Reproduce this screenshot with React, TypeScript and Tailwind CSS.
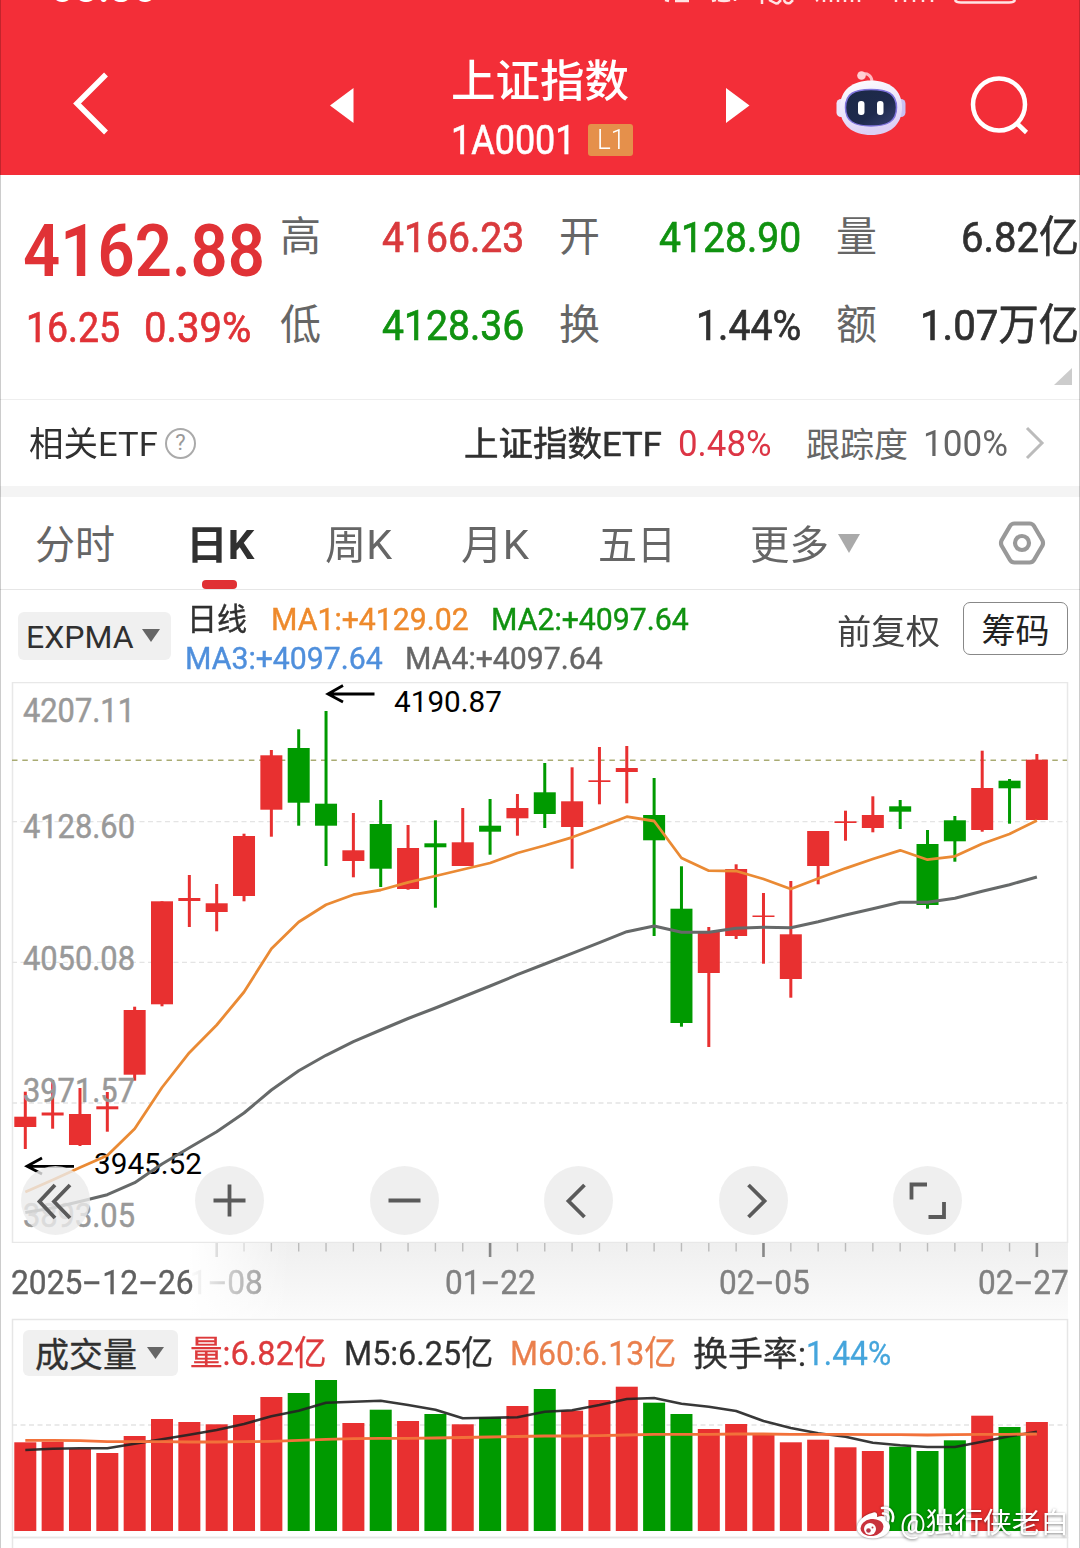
import { Fragment, useLayoutEffect, useRef, useState } from 'react';
import type { ReactNode } from 'react';
import clsx from 'clsx';

const RED = '#e83030';
const GREEN = '#009a00';

const STEP = 27.34;
const FIRST_X = 25.3;
const BAR_WIDTH = 22;

const xAt = (index: number) => FIRST_X + index * STEP;

interface Candle {
  up: boolean;
  high: number;
  top: number;
  bottom: number;
  low: number;
  volume: number;
}

const c = (dir: 'r' | 'g', high: number, top: number, bottom: number, low: number, volume: number): Candle => ({
  up: dir === 'r',
  high,
  top,
  bottom,
  low,
  volume,
});

// Positions are in chart space, volume is the top edge of the bar
const candles: Candle[] = [
  c('r', 1091.7, 1116.7, 1127, 1149, 1442.3),
  c('r', 1080, 1112.5, 1115.5, 1128.7, 1441.7),
  c('r', 1088, 1114, 1145, 1146, 1449),
  c('r', 1092, 1106.3, 1109.3, 1131.7, 1453),
  c('r', 1006.7, 1010, 1074.7, 1080.7, 1436),
  c('r', 901.3, 901.3, 1004.3, 1006.3, 1419),
  c('r', 875, 898, 901, 927, 1422),
  c('r', 884, 903.3, 912, 931.3, 1424.3),
  c('r', 833.7, 836, 896, 901.3, 1415),
  c('r', 750, 755.3, 809.7, 836.7, 1397),
  c('g', 729.3, 748, 802.7, 825.7, 1393),
  c('g', 711, 803.7, 825.7, 866, 1380),
  c('r', 813, 850.3, 861, 877.3, 1423),
  c('g', 800, 824, 868.7, 887, 1409.7),
  c('r', 825, 848, 889, 889.7, 1421),
  c('g', 820.3, 843.3, 847.3, 907.7, 1414),
  c('r', 808, 842.3, 866, 866, 1424.3),
  c('g', 799, 825.7, 831.7, 854.7, 1417.3),
  c('r', 794, 808, 818.3, 835.7, 1406),
  c('g', 763, 792.3, 814, 828, 1389),
  c('r', 767.3, 801.3, 827, 868.7, 1410.7),
  c('r', 747, 780.3, 782, 804.3, 1400),
  c('r', 746, 768, 772, 803.3, 1386.7),
  c('g', 778, 815, 840.3, 936, 1402.7),
  c('g', 866.3, 908.7, 1023, 1026.7, 1414),
  c('r', 927, 931.7, 973, 1047, 1429),
  c('r', 864.3, 869, 936, 939, 1424),
  c('r', 893, 915.5, 917, 963.7, 1435),
  c('r', 881, 934.3, 979, 997.7, 1442.3),
  c('r', 831, 831, 866, 884.3, 1439.7),
  c('r', 810.7, 821.3, 823, 840.7, 1447.3),
  c('r', 796.3, 815, 828, 832.3, 1451),
  c('g', 800, 806.3, 811.7, 829, 1446.7),
  c('g', 830, 844, 905, 908.7, 1451),
  c('g', 816, 820.3, 841.3, 861.7, 1440.3),
  c('r', 750.7, 788, 830, 831.7, 1415.7),
  c('g', 779, 780.7, 788.3, 823.7, 1427),
  c('r', 754, 759.7, 820, 820, 1422),
];

const fastMa = [
  1192, 1180, 1167.5, 1155.5, 1128.7, 1087.5, 1052.7, 1025, 992, 948.7, 922, 904.7, 894.7, 890, 882.3, 876, 869.5,
  863, 853, 845.5, 837.3, 827.3, 816.7, 821, 858, 870.7, 871, 879, 889, 878.5, 868.3, 859, 850.3, 859.7, 856.3,
  843.7, 834, 820.5,
];

const slowMa = [
  1212.5, 1208, 1201.5, 1194.7, 1182.7, 1164, 1147.7, 1131.7, 1113, 1090, 1070.7, 1055.3, 1041.7, 1030, 1018.5, 1008,
  997, 986, 974.7, 964, 953.3, 942.7, 931.7, 926, 932.3, 932.3, 928.3, 927.3, 927.7, 921.7, 915, 908.7, 902.3, 902.3,
  898.3, 891.3, 884.7, 877,
];

const volumeM5 = [
  1450, 1448.7, 1448.3, 1448.3, 1443.7, 1439.3, 1434.7, 1430, 1424, 1416.3, 1410.7, 1402.7, 1401.7, 1400.7, 1405,
  1409.7, 1418.3, 1417.7, 1417.3, 1411.7, 1410.3, 1405, 1399, 1398, 1403.7, 1406.7, 1411, 1421, 1428, 1433.3, 1436.7,
  1442.7, 1445.3, 1447, 1447, 1441.7, 1436.3, 1431.7,
];

const volumeM60 = [
  1440.3, 1440.3, 1440.7, 1441.7, 1441.7, 1441.7, 1442, 1442, 1441.7, 1441.3, 1440.3, 1439.3, 1438.7, 1438.3, 1438.3,
  1438, 1437.5, 1437, 1436.5, 1436, 1436, 1435.7, 1435, 1434.3, 1434.3, 1434.3, 1434, 1434, 1434.3, 1434.3, 1434.3,
  1434.7, 1434.7, 1435, 1434.7, 1434.3, 1434.3, 1434,
];

const toPoints = (values: number[]) => values.map((y, i) => `${xAt(i).toFixed(1)},${y}`).join(' ');

// Squeezes a line of text horizontally so that it fills its box
function Fit({ className, children }: { className?: string; children: ReactNode }) {
  const outerRef = useRef<HTMLSpanElement>(null);
  const innerRef = useRef<HTMLSpanElement>(null);
  const [scale, setScale] = useState(1);

  useLayoutEffect(() => {
    if (outerRef.current && innerRef.current) {
      setScale(outerRef.current.clientWidth / innerRef.current.offsetWidth);
    }
  }, [children]);

  return (
    <span ref={outerRef} className={clsx('block shrink-0 leading-none', className)}>
      <span
        ref={innerRef}
        className="inline-block origin-left whitespace-nowrap"
        style={{ transform: `scaleX(${scale})` }}
      >
        {children}
      </span>
    </span>
  );
}

// Dates are set with wide dashes between the parts
function DateText({ value, className }: { value: string; className?: string }) {
  return (
    <Fit className={clsx('[-webkit-text-stroke:0.4px]', className)}>
      {value.split('-').map((part, i) => (
        <Fragment key={i}>
          {i > 0 && <span className="mx-[6px] inline-block -translate-y-px scale-x-[1.9]">-</span>}
          {part}
        </Fragment>
      ))}
    </Fit>
  );
}

function RobotIcon() {
  return (
    <svg width="72" height="72" viewBox="0 0 72 72" className="mt-[60px] ml-[85px] shrink-0">
      <defs>
        <linearGradient id="shell" x1="0" y1="0" x2="0.3" y2="1">
          <stop offset="0" stopColor="#ffffff" />
          <stop offset="0.55" stopColor="#ece6fb" />
          <stop offset="1" stopColor="#dcd0f5" />
        </linearGradient>
        <linearGradient id="visor" x1="0" y1="0" x2="1" y2="1">
          <stop offset="0" stopColor="#1b2946" />
          <stop offset="0.6" stopColor="#1f2a4d" />
          <stop offset="1" stopColor="#37406f" />
        </linearGradient>
      </defs>
      <path d="M27 8.500c5-2 9.500 1 10 6.500" fill="none" stroke="#ffb9c0" strokeWidth="3" />
      <circle cx="26.500" cy="9.500" r="4.300" fill="#ffd0d3" />
      <rect x="1.500" y="33" width="11" height="18" rx="4.500" fill="#ece4fa" />
      <rect x="59.500" y="33" width="11" height="18" rx="4.500" fill="#c9c0f3" />
      <path d="M36 14.500c18 0 31 9 31 27S54 69 36 69 5 59.500 5 41.500s13-27 31-27z" fill="url(#shell)" />
      <path
        d="M36 23.500c16.500 0 25.500 4 25.500 18S52.500 60 36 60s-25.500-4.500-25.500-18.500 9-18 25.500-18z"
        fill="url(#visor)"
        stroke="#7f74dd"
        strokeWidth="1.500"
      />
      <rect x="23" y="35" width="6.500" height="14" rx="3" fill="#fff" />
      <rect x="42" y="35" width="6.500" height="14" rx="3" fill="#fff" />
    </svg>
  );
}

function StatusBar() {
  return (
    <div className="relative h-[6px] overflow-hidden">
      <span className="absolute bottom-[-3px] left-[51px] text-[40px] leading-none font-medium tracking-[1px]">08:30</span>
      <svg width="370" height="6" viewBox="0 0 370 6" className="absolute top-0 right-[56px]" fill="none" stroke="#ffe3e3" strokeWidth="2.500">
        <path d="M11 0l4 1M21 1h14M58 1l4-1M64 0q6 2 12 0M81 0v1M108 0v4M115 0l8 4M123 4l4-4M130 0q1 4 6 3l3-3" />
        <path d="M162 1l2-1M170 0v2M177 0v2M184 0v2M191 0v2M198 0v2M205 0v2M242 0v2M251 0v2M260 0v2M269 0v2M278 0v2" />
        <path d="M301 0q1 2.500 6 2.500h48q5 0 6-2.500" />
      </svg>
    </div>
  );
}

function Header() {
  return (
    <header className="h-[175px] bg-[#f32e38] text-white">
      <StatusBar />
      <div className="flex h-[169px] items-start">
        <svg width="40" height="64" viewBox="0 0 40 64" className="mt-[65px] ml-[71px]" fill="none" stroke="#fff" strokeWidth="5.500">
          <path d="M35 3.500L6 32.500L35 61.500" />
        </svg>
        <svg width="24" height="36" viewBox="0 0 24 36" className="mt-[82px] ml-[219px]" fill="#fff">
          <path d="M0 17.500L23.500 0V35z" />
        </svg>
        <div className="ml-[97px] w-[184px]">
          <Fit className="mt-[54px] w-[178px] text-[44px] font-medium">上证指数</Fit>
          <div className="mt-[14px] flex items-center">
            <Fit className="mt-[3px] w-[125px] text-[40px] [-webkit-text-stroke:0.6px]">1A0001</Fit>
            <div className="ml-[12px] flex h-[32px] w-[45px] justify-center rounded-[3px] bg-[#e5904b] pt-[3px]">
              <Fit className="w-[28px] text-[27px] font-light">L1</Fit>
            </div>
          </div>
        </div>
        <svg width="24" height="36" viewBox="0 0 24 36" className="mt-[82px] ml-[91px]" fill="#fff">
          <path d="M0 0L23.500 17.500L0 35z" />
        </svg>
        <RobotIcon />
        <svg width="60" height="60" viewBox="0 0 60 60" className="mt-[70px] ml-[62px]" fill="none" stroke="#fff" strokeWidth="4.500">
          <circle cx="30" cy="28.500" r="26" />
          <path d="M47.500 47L57.500 56.500" />
        </svg>
      </div>
    </header>
  );
}

function QuoteCell({ label, valueClass, children }: { label: string; valueClass: string; children: ReactNode }) {
  return (
    <div className="flex h-[88px] items-center justify-between">
      <span className="text-[41px] leading-none text-[#666]">{label}</span>
      <Fit className={clsx('text-[43px] [-webkit-text-stroke:0.7px]', valueClass)}>{children}</Fit>
    </div>
  );
}

function Quote() {
  return (
    <section className="relative flex h-[225px] border-b border-[#eee] pt-[18px]">
      <div className="ml-[23px] w-[257px] pt-[22px] text-[#e03236]">
        <Fit className="w-[242px] text-[73px] font-semibold">4162.88</Fit>
        <div className="mt-[18px] flex gap-[24px] [-webkit-text-stroke:0.7px]">
          <Fit className="ml-[3px] w-[94px] text-[43px]">16.25</Fit>
          <Fit className="w-[107px] text-[43px]">0.39%</Fit>
        </div>
      </div>
      <div className="w-[244px]">
        <QuoteCell label="高" valueClass="w-[142px] text-[#d93a3d]">4166.23</QuoteCell>
        <QuoteCell label="低" valueClass="w-[142px] text-[#109210]">4128.36</QuoteCell>
      </div>
      <div className="ml-[35px] w-[242px]">
        <QuoteCell label="开" valueClass="w-[142px] text-[#109210]">4128.90</QuoteCell>
        <QuoteCell label="换" valueClass="w-[105px] text-[#303030]">1.44%</QuoteCell>
      </div>
      <div className="ml-[35px] w-[243px]">
        <QuoteCell label="量" valueClass="w-[118px] text-[#303030]">6.82亿</QuoteCell>
        <QuoteCell label="额" valueClass="w-[159px] text-[#303030]">1.07万亿</QuoteCell>
      </div>
      <svg width="18" height="17" viewBox="0 0 18 17" className="absolute right-[8px] bottom-[14px]" fill="#ccc">
        <path d="M18 0V17H0z" />
      </svg>
    </section>
  );
}

function EtfRow() {
  return (
    <section className="flex h-[86px] items-center text-[34px] text-[#303030]">
      <Fit className="mt-[2px] ml-[29px] w-[129px]">相关ETF</Fit>
      <span className="ml-[7px] flex size-[31px] items-center justify-center rounded-full border-2 border-[#aaa] text-[22px] leading-none text-[#999]">
        ?
      </span>
      <Fit className="mt-[2px] ml-[268px] w-[198px] [-webkit-text-stroke:0.6px]">上证指数ETF</Fit>
      <Fit className="mt-[2px] ml-[16px] w-[94px] text-[36px] text-[#dc3545]">0.48%</Fit>
      <Fit className="mt-[4px] ml-[34px] w-[102px] text-[#666]">跟踪度</Fit>
      <Fit className="mt-[2px] ml-[15px] w-[85px] text-[36px] text-[#666]">100%</Fit>
      <svg width="20" height="34" viewBox="0 0 20 34" className="ml-[17px]" fill="none" stroke="#bbb" strokeWidth="3">
        <path d="M2 2L17 17L2 32" />
      </svg>
    </section>
  );
}

function Tabs() {
  return (
    <nav className="flex h-[93px] items-center border-b border-[#e6e6e6] text-[40px] text-[#666]">
      <Fit className="mt-[5px] ml-[35px] w-[80px]">分时</Fit>
      <div className="relative ml-[71px] flex h-full w-[69px] items-center">
        <Fit className="mt-[5px] w-[68px] font-bold text-[#303030]">日K</Fit>
        <span className="absolute bottom-0 left-[16px] h-[9px] w-[35px] rounded-[4px] bg-[#e03033]" />
      </div>
      <Fit className="mt-[5px] ml-[70px] w-[67px]">周K</Fit>
      <Fit className="mt-[5px] ml-[69px] w-[68px]">月K</Fit>
      <Fit className="mt-[5px] ml-[69px] w-[78px]">五日</Fit>
      <Fit className="mt-[5px] ml-[74px] w-[79px]">更多</Fit>
      <svg width="22" height="19" viewBox="0 0 22 19" className="ml-[9px]" fill="#aaa">
        <path d="M0 0H22L11 19z" />
      </svg>
      <svg width="48" height="46" viewBox="0 0 48 46" className="ml-[138px]" fill="none" stroke="#999" strokeWidth="4.200" strokeLinejoin="round">
        <path d="M16.500 3.500H31.500Q34.500 3.500 36 6L44.500 20.500Q45.500 23 44.500 25.500L36 40Q34.500 42.500 31.500 42.500H16.500Q13.500 42.500 12 40L3.500 25.500Q2.500 23 3.500 20.500L12 6Q13.500 3.500 16.500 3.500z" />
        <circle cx="24" cy="23" r="7" />
      </svg>
    </nav>
  );
}

function IndicatorBar() {
  return (
    <section className="flex h-[92px] items-start text-[31px]">
      <div className="mt-[22px] ml-[18px] flex h-[48px] w-[153px] items-center rounded-[6px] bg-[#f0f0f0] pt-[2px] pl-[8px]">
        <Fit className="w-[108px] text-[32px] text-[#303030]">EXPMA</Fit>
        <svg width="18" height="13" viewBox="0 0 18 13" className="mb-[4px] ml-[8px]" fill="#666">
          <path d="M0 0H18L9 13z" />
        </svg>
      </div>
      <div className="ml-[15px] w-[520px] [-webkit-text-stroke:0.4px]">
        <div className="mt-[14px] flex">
          <Fit className="ml-px w-[60px] text-[#303030]">日线</Fit>
          <Fit className="ml-[24px] w-[198px] text-[#ee8a2c]">MA1:+4129.02</Fit>
          <Fit className="ml-[22px] w-[198px] text-[#109210]">MA2:+4097.64</Fit>
        </div>
        <div className="mt-[8px] flex">
          <Fit className="-ml-px w-[198px] text-[#4f8fdc]">MA3:+4097.64</Fit>
          <Fit className="ml-[22px] w-[198px] text-[#666]">MA4:+4097.64</Fit>
        </div>
      </div>
      <Fit className="mt-[25px] ml-[131px] w-[103px] text-[34px] text-[#444]">前复权</Fit>
      <div className="mt-[12px] ml-[23px] flex h-[53px] w-[105px] justify-center rounded-[7px] border border-[#888] pt-[11px]">
        <Fit className="w-[68px] text-[34px] text-[#222]">筹码</Fit>
      </div>
    </section>
  );
}

const axisLabels = [
  { text: '4207.11', y: 721.5 },
  { text: '4128.60', y: 838 },
  { text: '4050.08', y: 970.3 },
  { text: '3971.57', y: 1102.3 },
  { text: '3893.05', y: 1227.3 },
];

function KLineChart() {
  return (
    <svg width="1080" height="562" viewBox="0 682 1080 562" className="block">
      <rect x="12.500" y="682.500" width="1055" height="560" fill="none" stroke="#e8e8e8" strokeWidth="1.500" />
      {[821.7, 962.3, 1103].map((y) => (
        <line key={y} x1="12" x2="1067" y1={y} y2={y} stroke="#e4e4e4" strokeWidth="1.300" strokeDasharray="5 3.500" />
      ))}
      <line x1="12" x2="1067" y1="760.300" y2="760.300" stroke="#a9ab72" strokeWidth="1.600" strokeDasharray="5.500 4.800" />
      {candles.map((k, i) => {
        const color = k.up ? RED : GREEN;
        return (
          <g key={i} fill={color}>
            <rect x={xAt(i) - 1.5} y={k.high} width="3" height={k.low - k.high} />
            <rect x={xAt(i) - BAR_WIDTH / 2} y={k.top} width={BAR_WIDTH} height={k.bottom - k.top} />
          </g>
        );
      })}
      <g fontSize="33" fill="#999" stroke="#999" strokeWidth="0.500">
        {axisLabels.map((label) => (
          <text key={label.text} x="23" y={label.y} textLength="112" lengthAdjust="spacingAndGlyphs">
            {label.text}
          </text>
        ))}
      </g>
      <g fontSize="30" fill="#000">
        <text x="394" y="711.500" textLength="108" lengthAdjust="spacingAndGlyphs">4190.87</text>
        <text x="94" y="1174" textLength="108" lengthAdjust="spacingAndGlyphs">3945.52</text>
      </g>
      <g fill="none" stroke="#000" strokeWidth="2.800">
        <path d="M374.500 694H328M343 685.500L328 694L343 702" />
        <path d="M74 1166.300H27M42 1158L27 1166.300L42 1174" />
      </g>
      <polyline points={toPoints(fastMa)} fill="none" stroke="#ea8a34" strokeWidth="2.800" strokeLinejoin="round" />
      <polyline points={toPoints(slowMa)} fill="none" stroke="#666969" strokeWidth="3" strokeLinejoin="round" />
    </svg>
  );
}

const controls = [
  { name: 'older', d: 'M34 19L18.500 35.500L34 52M49 19L33 35.500L49 52' },
  { name: 'zoom-in', d: 'M18.500 34.500H50.500M34.500 18.500V50.500' },
  { name: 'zoom-out', d: 'M18.500 34.500H50.500' },
  { name: 'prev', d: 'M40.500 19L24.500 35L40.500 51' },
  { name: 'next', d: 'M29.500 19L45.500 35L29.500 51' },
  { name: 'fullscreen', d: 'M18.500 33.500V18.500H34M35.500 51H51V36' },
];

function ChartControls() {
  return (
    <div className="absolute bottom-[8px] left-[20.500px] flex gap-[105.6px]">
      {controls.map((item) => (
        <button key={item.name} aria-label={item.name} className="size-[69px] rounded-full bg-[#ebebeb]/80">
          <svg width="69" height="69" viewBox="0 0 69 69" fill="none" stroke="#5a5a5a" strokeWidth="3.800">
            <path d={item.d} />
          </svg>
        </button>
      ))}
    </div>
  );
}

function DateAxis() {
  return (
    <div className="relative h-[75px] bg-linear-to-b from-[#efefef] to-[#fbfbfb]">
      <svg width="1080" height="16" viewBox="0 0 1080 16" className="block">
        {candles.map((_, i) => {
          if (i < 7) return null;
          const major = i % 10 === 7;
          return (
            <line
              key={i}
              x1={xAt(i)}
              x2={xAt(i)}
              y1="0"
              y2={major ? 14 : 8.5}
              stroke={major ? '#888' : '#bbb'}
              strokeWidth={major ? 2.6 : 1.4}
            />
          );
        })}
      </svg>
      <div className="flex pt-[6px] pl-[172px] text-[34px] text-[#808080]">
        <DateText value="01-08" className="w-[91px]" />
        <DateText value="01-22" className="ml-[182px] w-[91px]" />
        <DateText value="02-05" className="ml-[183px] w-[91px]" />
        <DateText value="02-27" className="ml-[168px] w-[91px]" />
      </div>
      {/* start date fades over the first tick label */}
      <div className="absolute top-0 left-0 h-full w-[290px] bg-linear-to-r from-white from-65% to-white/0" />
      <DateText value="2025-12-26" className="absolute top-[22px] left-[11px] w-[183px] text-[34px] text-[#606060]" />
      <div className="absolute top-0 right-0 h-full w-[12px] bg-white" />
    </div>
  );
}

function VolumePanel() {
  return (
    <section className="relative h-[230px] overflow-hidden">
      <svg width="1080" height="230" viewBox="0 1318 1080 230" className="block">
        <rect x="12.500" y="1319.500" width="1055" height="218" fill="none" stroke="#e6e6e6" strokeWidth="1.500" />
        <path d="M12.500 1548V1537.500H1067.500V1548" fill="none" stroke="#e6e6e6" strokeWidth="1.500" />
        <line x1="12" x2="1067" y1="1425" y2="1425" stroke="#e4e4e4" strokeWidth="1.300" strokeDasharray="5 3.500" />
        {candles.map((k, i) => (
          <rect
            key={i}
            x={xAt(i) - BAR_WIDTH / 2}
            y={k.volume}
            width={BAR_WIDTH}
            height={1531 - k.volume}
            fill={k.up ? RED : GREEN}
          />
        ))}
        <polyline points={toPoints(volumeM5)} fill="none" stroke="#222" strokeOpacity="0.9" strokeWidth="2.600" strokeLinejoin="round" />
        <polyline points={toPoints(volumeM60)} fill="none" stroke="#f2713a" strokeWidth="2.800" />
      </svg>
      <div className="absolute top-[12px] left-[23px] flex h-[46px] items-center text-[34px] text-[#303030] [-webkit-text-stroke:0.3px]">
        <div className="flex h-full w-[155px] items-center rounded-[6px] bg-[#f0f0f0] pl-[12px]">
          <Fit className="mt-[3px] w-[102px]">成交量</Fit>
          <svg width="17" height="12" viewBox="0 0 17 12" className="ml-[10px]" fill="#666">
            <path d="M0 0H17L8.500 12z" />
          </svg>
        </div>
        <Fit className="ml-[12px] w-[137px] text-[#dd3a3c]">量:6.82亿</Fit>
        <Fit className="ml-[17px] w-[149px]">M5:6.25亿</Fit>
        <Fit className="ml-[17px] w-[166px] text-[#ea7f4c]">M60:6.13亿</Fit>
        <Fit className="mt-px ml-[17px] w-[113px]">换手率:</Fit>
        <Fit className="w-[85px] text-[#45a5dc]">1.44%</Fit>
      </div>
      <div className="absolute right-[11px] bottom-[8px] flex items-center gap-[4px] text-white">
        <svg width="40" height="34" viewBox="0 0 40 34" className="drop-shadow-[0_0_1px_rgba(0,0,0,0.5)]">
          <path
            d="M16 7c3-1.500 6-.5 5 4 5-2 9-1.500 8.500 3-.2 1.500 4.500 2 4.500 7 0 6.500-8 11.500-17 11.500S1 28 1 21.500C1 16 9 8 16 7z"
            fill="#fff"
          />
          <ellipse cx="16" cy="21.500" rx="11.500" ry="8.500" fill="#c8323c" transform="rotate(-8 16 21.500)" />
          <circle cx="14" cy="23" r="6" fill="#fff" />
          <circle cx="12.500" cy="24.500" r="2.300" fill="#b83a48" />
          <circle cx="16.500" cy="21.500" r="1" fill="#b83a48" />
          <path d="M26 2c8-1.500 13 5 10.500 13M27 7.500c4-.5 6.500 2.500 5 6.500" fill="none" stroke="#fff" strokeWidth="2.600" strokeLinecap="round" />
        </svg>
        <Fit className="mt-[2px] w-[169px] text-[28px] [text-shadow:0_1px_3px_rgba(0,0,0,0.55)]">@独行侠老白</Fit>
      </div>
    </section>
  );
}

export default function App() {
  return (
    <div className="relative h-[1548px] w-[1080px] overflow-hidden bg-white font-[Roboto,'Noto_Sans_CJK_SC',sans-serif]">
      <Header />
      <Quote />
      <EtfRow />
      <div className="h-[11px] bg-[#f4f4f4]" />
      <Tabs />
      <IndicatorBar />
      <div className="relative h-[561px]">
        <KLineChart />
        <ChartControls />
      </div>
      <DateAxis />
      <VolumePanel />
      <div className="pointer-events-none absolute inset-0 border-x border-black/20" />
    </div>
  );
}
